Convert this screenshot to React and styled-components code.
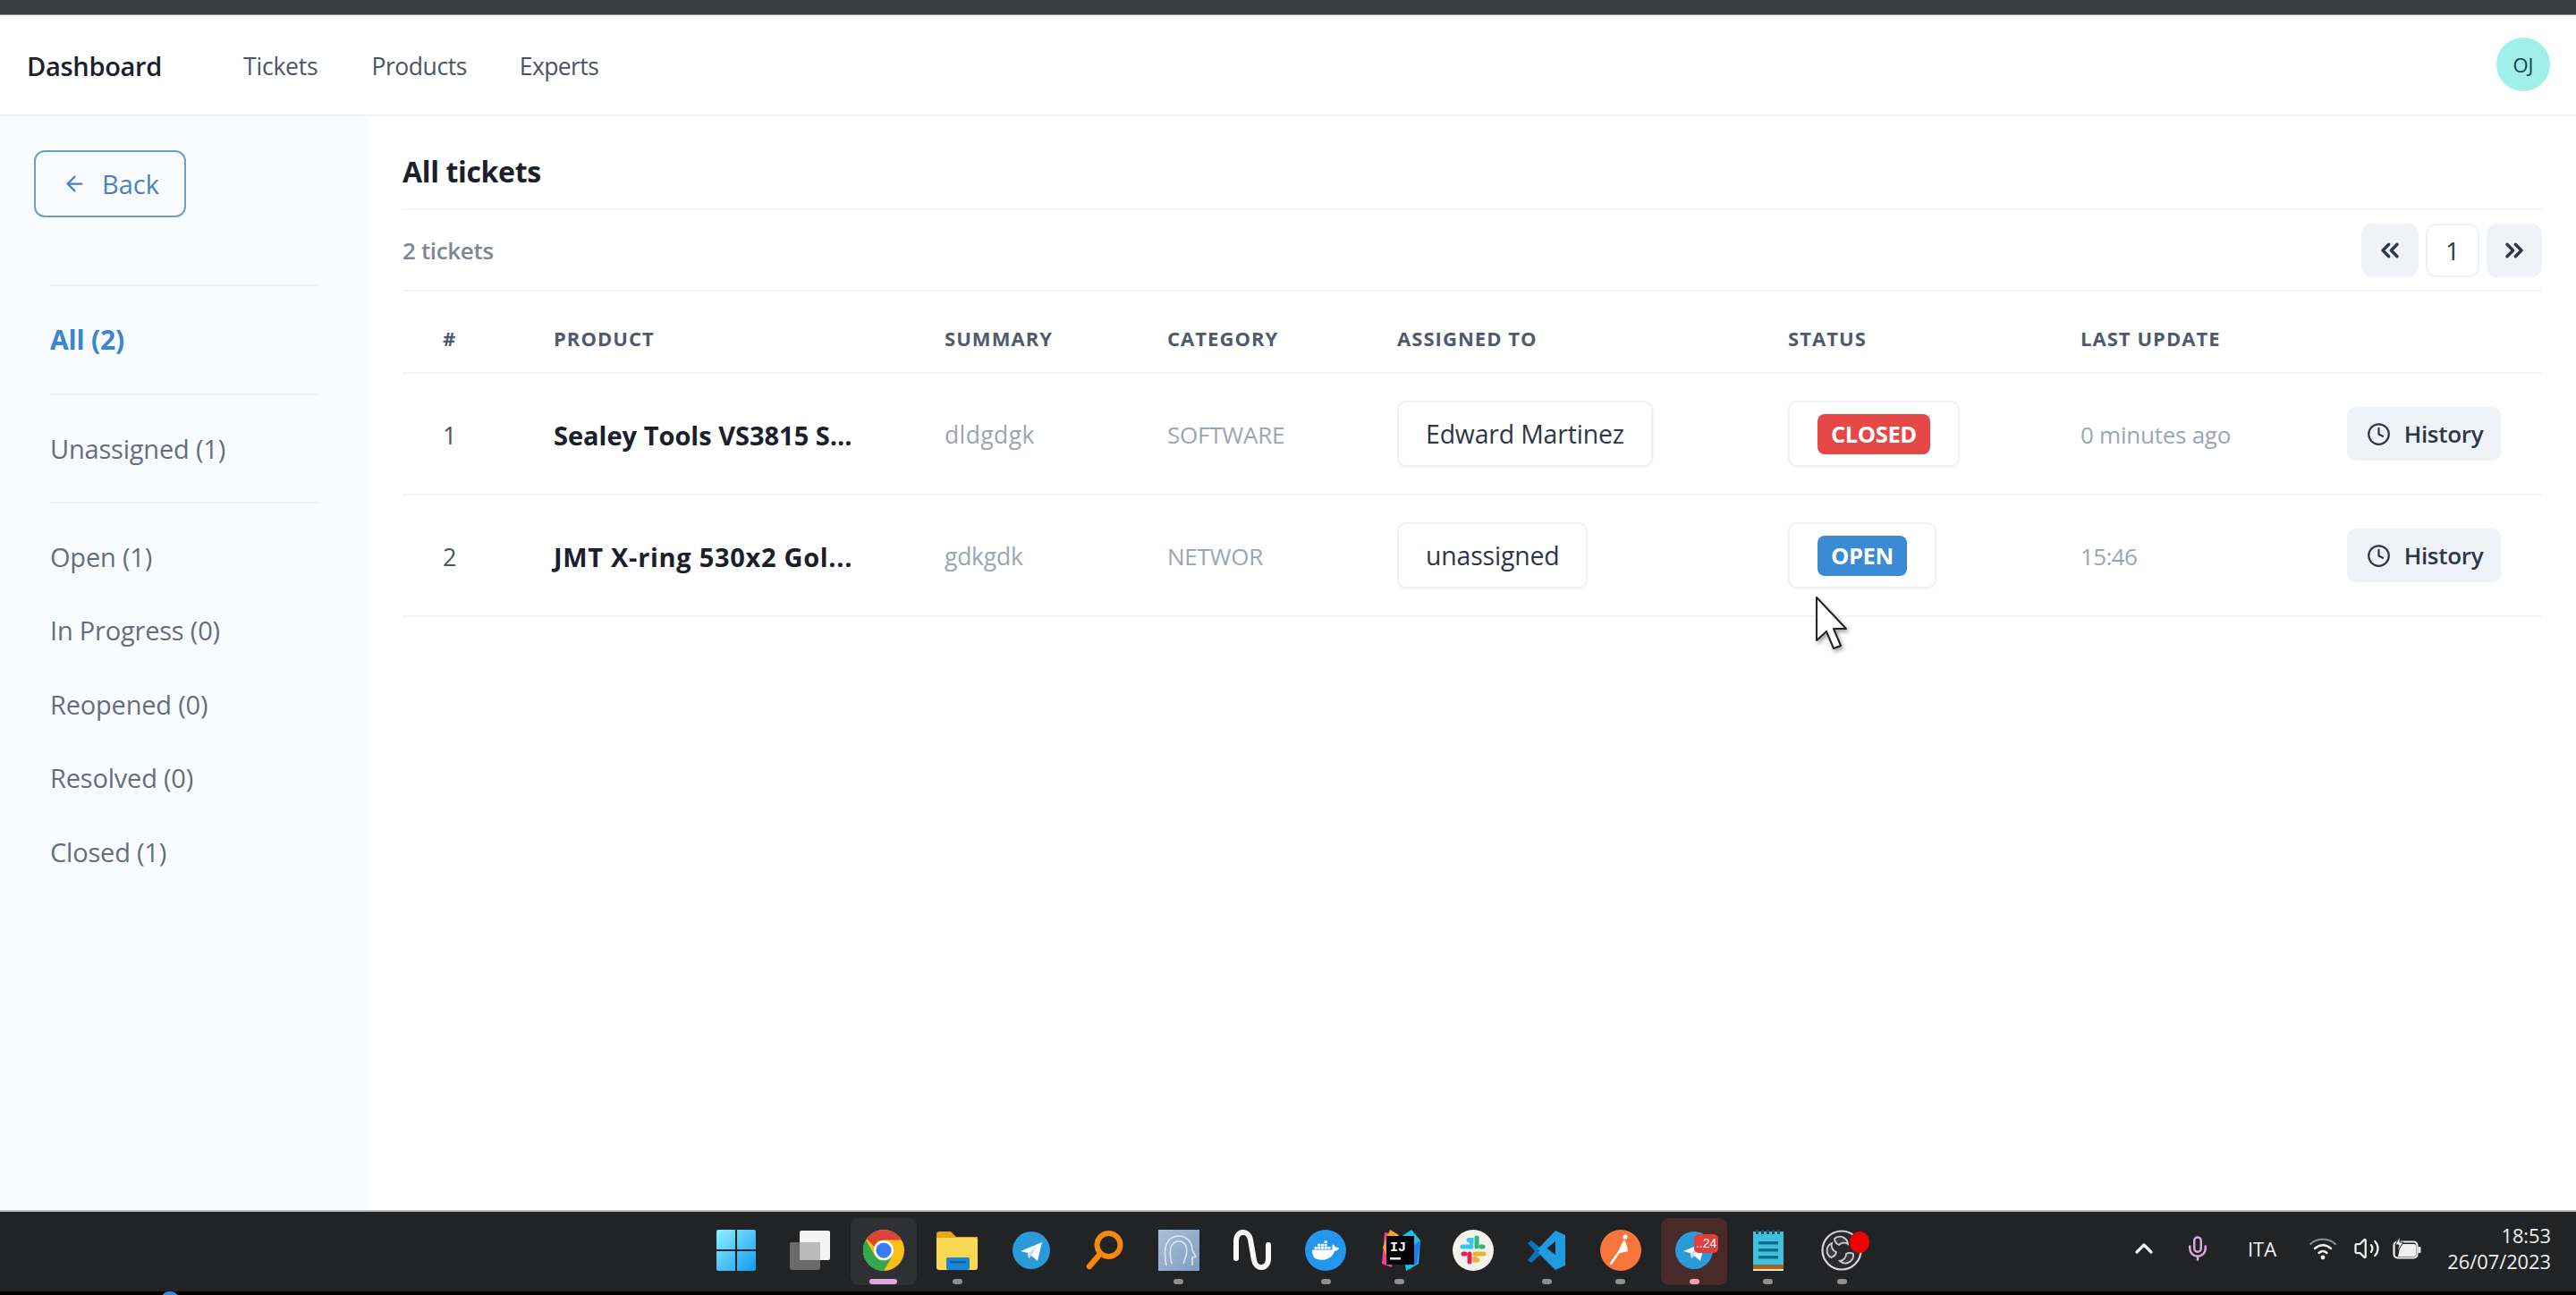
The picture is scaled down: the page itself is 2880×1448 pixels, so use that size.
import React from 'react';
import styled, { createGlobalStyle } from 'styled-components';
import { ArrowLeft, ChevronsLeft, ChevronsRight, Clock, ChevronUp, Mic, Volume2 } from 'lucide-react';
import { SiDocker } from 'react-icons/si';

const Global = createGlobalStyle`
  html, body { margin: 0; padding: 0; background: #fff; }
  * { box-sizing: border-box; }
  body { font-family: "Open Sans", "Noto Sans", "Liberation Sans", sans-serif; color: #1a202c; }
`;
const Page = styled.div`position: relative; width: 2880px; height: 1448px; display: flex; flex-direction: column; overflow: hidden; background: #fff;`;
const TopStrip = styled.div`height: 17px; flex: none; background: #3c3d42; border-bottom: 1px solid #8f9094;`;
const Nav = styled.nav`height: 113px; flex: none; display: flex; align-items: center; padding: 2px 29px 0 30px; border-bottom: 2px solid #edf2f7;`;
const Brand = styled.div`font-size: 29px; font-weight: 600; letter-spacing: -0.3px; width: 242px; color: #1a202c;`;
const NavLink = styled.a`font-size: 26.5px; color: #4a5568; letter-spacing: ${p => p.$track}px; margin-right: ${p => p.$gap}px;`;
const Avatar = styled.div`margin-left: auto; width: 60px; height: 60px; margin-top: -4px; border-radius: 50%; background: #a0efe9; display: flex; align-items: center; justify-content: center; font-size: 22px; font-weight: 500; color: #1a3b44;`;
const Body = styled.div`flex: 1; display: flex; min-height: 0;`;
const Sidebar = styled.aside`width: 412px; flex: none; background: #f9fcfe; padding: 38px 55px 0 38px;`;
const BackButton = styled.button`width: 170px; height: 75px; border: 2px solid #6d9cc9; border-radius: 12px; background: transparent; color: #4a82ba; font: 500 29px "Open Sans", sans-serif; display: flex; align-items: center; justify-content: center; gap: 17px; padding: 0 0 0 2px;`;
const SideNav = styled.div`margin: 75px 0 0 18px;`;
const SideGroup = styled.div`padding: ${p => p.$top}px 0 ${p => p.$bottom}px; border-top: 2px solid #eef3f8; display: flex; flex-direction: column; gap: 42.4px;`;
const SideLink = styled.a`height: 40px; line-height: 40px; font-size: ${p => p.$active ? 30 : 29}px; letter-spacing: -0.2px; white-space: nowrap; color: ${p => p.$active ? '#3a86d0' : '#636e7f'}; font-weight: ${p => p.$active ? 700 : 400};`;
const Main = styled.main`flex: 1; min-width: 0; padding: 0 38px;`;
const TitleRow = styled.div`height: 105px; display: flex; align-items: center; padding-top: 20px; border-bottom: 2px solid #f1f4f8;`;
const Title = styled.h1`margin: 0; font-size: 32px; font-weight: 700; letter-spacing: -0.35px; color: #1a202c;`;
const CountRow = styled.div`height: 91px; display: flex; align-items: center; justify-content: space-between; border-bottom: 2px solid #f1f4f8;`;
const Count = styled.div`font-size: 26px; font-weight: 600; color: #7d8797; letter-spacing: -0.35px;`;
const Pager = styled.div`display: flex; gap: 8px;`;
const PageArrow = styled.button`width: ${p => p.$w}px; height: 60px; border: 0; border-radius: 12px; background: #eff3f8; color: #2d3748; display: flex; align-items: center; justify-content: center; padding: 0;`;
const PageNumber = styled.div`width: 60px; height: 60px; border: 2px solid #edf2f7; border-radius: 12px; background: #fff; display: flex; align-items: center; justify-content: center; font-size: 28px; color: #2d3748;`;
const columns = '124px 437px 249px 257px 437px 327px 298px 1fr';
const HeadRow = styled.div`height: 92px; display: grid; grid-template-columns: ${columns}; align-items: center; padding: 14px 0 0 45px; border-bottom: 2px solid #f1f4f8;`;
const HeadCell = styled.div`font-size: 22px; font-weight: 700; letter-spacing: 1.05px; color: #4f5b6d; text-transform: uppercase;`;
const Row = styled.div`height: 136px; display: grid; grid-template-columns: ${columns}; align-items: center; padding-left: 45px; border-bottom: 2px solid #f1f4f8;`;
const Num = styled.div`font-size: 27px; color: #4a5568; padding-top: 2px;`;
const Product = styled.div`font-size: 29px; font-weight: 700; letter-spacing: ${p => p.$track}px; color: #1a202c; white-space: nowrap; padding-top: 2px;`;
const Muted = styled.div`font-size: ${p => p.$size || 26.5}px; letter-spacing: ${p => p.$track ?? -0.25}px; color: #9aa5b6; white-space: nowrap; padding-top: 2px;`;
const Box = styled.div`display: inline-flex; align-items: center; height: 74px; padding: 0 ${p => p.$pad}px; border: 2px solid #eef2f7; border-radius: 10px; box-shadow: 0 1px 2px rgba(160,175,195,.18); white-space: nowrap;`;
const Assignee = styled(Box)`font-size: 28.4px; letter-spacing: -0.15px; color: #2d3748; justify-self: start;`;
const StatusBox = styled(Box)`justify-self: start;`;
const Badge = styled.span`height: 45px; padding: 0 15px; border-radius: 8px; display: inline-flex; align-items: center; color: #fff; font-size: 25.5px; font-weight: 700; letter-spacing: -0.4px; background: ${p => p.$bg};`;
const History = styled.button`width: 172px; height: 60px; border: 0; border-radius: 10px; background: #eff3f8; color: #2d3748; display: flex; align-items: center; justify-content: center; gap: 15px; padding: 0 0 0 2px; font: 600 26px "Open Sans", sans-serif; letter-spacing: -0.3px;`;
const Taskbar = styled.footer`height: 91px; flex: none; display: flex; background: #212325; border-top: 2px solid #b9b9b9; padding-left: 782px;`;
const BlackStrip = styled.div`height: 4px; flex: none; background: #000; position: relative; overflow: hidden;`;
const BlueDot = styled.div`position: absolute; left: 179px; top: 0; width: 22px; height: 22px; border-radius: 50%; background: #2a8fe8;`;
const TaskItem = styled.div`width: 82.4px; height: 75px; margin-top: 7px; flex: none; display: flex; flex-direction: column; align-items: center; position: relative; padding-top: 13px;
  &::before { content: ''; position: absolute; inset: 0 4px; border-radius: 9px; background: ${p => p.$tile || 'transparent'}; }
  & > * { position: relative; }`;
const Indicator = styled.div`width: ${p => p.$w || 11}px; height: 6px; border-radius: 3px; margin-top: 9px; background: ${p => p.$c || 'transparent'};`;
const Tray = styled.div`margin-left: auto; display: flex; align-items: center; padding-right: 28px; color: #f2f2f2; padding-bottom: 8px;`;
const TrayCell = styled.div`width: ${p => p.$w}px; display: flex; justify-content: center; align-items: center; font-size: 22px; color: #f0f0f0;`;
const Clock2 = styled.div`width: 139px; display: flex; flex-direction: column; align-items: flex-end; font-size: 21.8px; line-height: 29px; color: #f0f0f0;`;
const Cursor = styled.svg`position: absolute; left: 2028px; top: 666px; filter: drop-shadow(2px 3px 2px rgba(0,0,0,.35));`;
const TgBadge = styled.div`position: absolute; top: 18px; left: 41px; width: 27px; height: 21px; border-radius: 5px; background: #e0403c; color: #fff; font-size: 14px; line-height: 21px; text-align: center; font-family: "Liberation Sans", sans-serif;`;
const RedDot = styled.div`position: absolute; top: 15px; left: 50px; width: 22px; height: 24px; border-radius: 50%; background: #f00000;`;

const S = 46;
const Win = () => <svg width={S} height={S} viewBox="0 0 44 44"><defs><linearGradient id="w" x1="0" y1="0" x2="1" y2="1"><stop offset="0" stopColor="#8ff0ff" /><stop offset="1" stopColor="#0f9cf5" /></linearGradient></defs><path fill="url(#w)" d="M1 2a2 2 0 0 1 2-2h18v21H1zM23 0h18a2 2 0 0 1 2 2v19H23zM1 23h20v21H3a2 2 0 0 1-2-2zM23 23h20v19a2 2 0 0 1-2 2H23z" /></svg>;
const TaskView = () => <svg width={S} height={S} viewBox="0 0 46 44"><rect x="0" y="13" width="34" height="31" rx="2" fill="#6a6a6a" /><rect x="11" y="0" width="34" height="33" rx="2" fill="#f4f4f4" /><rect x="11" y="13" width="23" height="20" fill="#b9b9b9" /></svg>;
const Chrome = () => <svg width={S} height={S} viewBox="0 0 48 48"><circle cx="24" cy="24" r="24" fill="#fbc013" /><path fill="#db4437" d="M24 0a24 24 0 0 1 20.8 12H24a12 12 0 0 0-11.2 7.6L4.1 10.6A24 24 0 0 1 24 0z" /><path fill="#32a852" d="M3.2 12A24 24 0 0 0 24 48l10.4-18A12 12 0 0 1 13.6 30z" /><circle cx="24" cy="24" r="11.5" fill="#fff" /><circle cx="24" cy="24" r="9" fill="#3b7cf0" /></svg>;
const Folder = () => <svg width={S} height={S} viewBox="0 0 46 44"><path fill="#e5a812" d="M0 4a3 3 0 0 1 3-3h13l6 6h24v8H0z" /><path fill="#fcd752" d="M0 8h43a3 3 0 0 1 3 3v30a3 3 0 0 1-3 3H3a3 3 0 0 1-3-3z" /><rect x="11" y="30" width="26" height="14" rx="2" fill="#1b86d6" /><rect x="15" y="34" width="18" height="2.5" fill="#0d5fa8" /></svg>;
const Telegram = () => <svg width={S} height={S} viewBox="0 0 46 46"><circle cx="23" cy="23" r="21" fill="#2a9bd8" /><path fill="#fff" d="M11 24l24-10-5 21-7-6-3 3-1-6z" /><path fill="#c9dde9" d="M20 26l9-7-6 10-3 3z" /></svg>;
const Search = () => <svg width={S} height={S} viewBox="0 0 46 46" fill="none" stroke="#f5890f" strokeLinecap="round"><circle cx="27.5" cy="17" r="13" strokeWidth="6" /><path d="M18 27L6 41" strokeWidth="6.5" /></svg>;
const Face = () => <svg width={S} height={S} viewBox="0 0 46 46" fill="none"><defs><linearGradient id="f" x1="0" y1="0" x2="1" y2="1"><stop offset="0" stopColor="#a9c0d8" /><stop offset="1" stopColor="#7f9dc0" /></linearGradient></defs><rect width="46" height="46" fill="url(#f)" /><path d="M9 40c-3-14-3-32 13-33 10 0 16 7 16 16l4 7-4 1v9" stroke="#dfe8f1" strokeWidth="1.6" /><path d="M15 38c-3-12-3-25 8-25 8 0 10 8 8 16l-3 9" stroke="#dfe8f1" strokeWidth="1.6" /></svg>;
const Squiggle = () => <svg width={S} height={S} viewBox="0 0 46 46" fill="none"><path d="M5 32V13c0-13 14-13 16-2l4 23c2 11 16 11 16-2V17" stroke="#f8f8f8" strokeWidth="6" strokeLinecap="round" /></svg>;
const Docker = () => <svg width={S} height={S} viewBox="0 0 46 46"><circle cx="23" cy="23" r="23" fill="#2496ed" /><SiDocker x="8" y="8" size="30" color="#fff" /></svg>;
const IJ = () => <svg width={S} height={S} viewBox="0 0 46 46"><path fill="#fc3d9c" d="M3 38L6 3l14 3-6 36z" /><path fill="#fca326" d="M4 20L12 0l10 6-12 26z" /><path fill="#12c4ea" d="M24 8L36 0l10 12-2 26-14 8z" /><path fill="#2177f0" d="M30 40l12-2 4-26-8 6z" /><rect x="8" y="7" width="31" height="32" fill="#000" /><text x="12" y="24" fill="#fff" fontSize="15" fontWeight="700" fontFamily="Liberation Mono, monospace">IJ</text><rect x="12" y="31" width="12" height="2.5" fill="#fff" /></svg>;
const Slack = () => <svg width={S} height={S} viewBox="0 0 46 46"><circle cx="23" cy="23" r="23" fill="#f4f0ea" /><g strokeWidth="5" strokeLinecap="round" fill="none"><path stroke="#36c5f0" d="M11 19h10M18 11.5h3v3" /><path stroke="#2eb67d" d="M27 9v10M34 19h-2" /><path stroke="#ecb22e" d="M25 27h10M28 34h-3v-2" /><path stroke="#e01e5a" d="M19 27v9M12 27h2" /></g></svg>;
const VSCode = () => <svg width={S} height={S} viewBox="0 0 46 46"><path fill="#0e74b8" d="M2 15l4-3 10 8-3 4 3 4-10 9-4-3 8-10z" /><path fill="#1f9be0" d="M33 1l11 5v34l-11 5-20-20 8-6 12 9V13L18 25l-5-3z" /></svg>;
const Postman = () => <svg width={S} height={S} viewBox="0 0 46 46"><circle cx="23" cy="23" r="23" fill="#f7763c" /><path d="M12 38l9-13 6-12 3 10-9 2" stroke="#fff" strokeWidth="2.4" strokeLinejoin="round" strokeLinecap="round" fill="#fff" /><circle cx="28" cy="8" r="2.6" fill="#fff" /></svg>;
const Notepad = () => <svg width={S} height={S} viewBox="0 0 36 46"><rect x="1" y="2" width="34" height="37" fill="#43c1dc" /><rect x="1" y="39" width="34" height="5" fill="#a2662a" /><rect x="1" y="44" width="34" height="2" fill="#f4e4c4" /><g fill="#1f4a66"><rect x="4" y="0" width="3" height="5" /><rect x="10" y="0" width="3" height="5" /><rect x="16" y="0" width="3" height="5" /><rect x="22" y="0" width="3" height="5" /><rect x="28" y="0" width="3" height="5" /></g><g fill="#0a6e90"><rect x="7" y="13" width="22" height="3.5" /><rect x="7" y="21" width="22" height="3.5" /><rect x="7" y="29" width="22" height="3.5" /></g></svg>;
const OBS = () => <svg width={S} height={S} viewBox="0 0 46 46" fill="none"><circle cx="23" cy="23" r="21.5" fill="#2a2a2e" stroke="#d8d8d8" strokeWidth="2.2" /><g stroke="#cfcfcf" strokeWidth="1.8" fill="#3a3a3e"><path d="M15 10a9 9 0 0 1 15 6 8 8 0 0 0-10 1 8 8 0 0 1-5-7z" /><path d="M36 27a9 9 0 0 1-15 8 8 8 0 0 0 7-8 8 8 0 0 1 8 0z" /><path d="M11 31a9 9 0 0 1 1-16 8 8 0 0 0 5 10 8 8 0 0 1-6 6z" /></g></svg>;
const WifiIcon = () => <svg width="32" height="28" viewBox="0 0 32 28" fill="none" strokeLinecap="round"><path d="M2 9c8-7 20-7 28 0" stroke="#8d8d8d" strokeWidth="2" /><path d="M7 14c6-5 12-5 18 0" stroke="#f0f0f0" strokeWidth="2.4" /><path d="M11.5 19c3-2.6 6-2.6 9 0" stroke="#f0f0f0" strokeWidth="2.4" /><circle cx="16" cy="24" r="2.4" fill="#f0f0f0" /></svg>;
const Battery = () => <svg width="32" height="28" viewBox="0 0 32 28" fill="none"><rect x="1.5" y="6.5" width="26" height="18" rx="4" stroke="#f0f0f0" strokeWidth="2.2" /><path d="M9 9h15a2 2 0 0 1 2 2v10a2 2 0 0 1-2 2H6z" fill="#f0f0f0" /><rect x="28.5" y="12" width="3" height="7" rx="1" fill="#f0f0f0" /><path d="M8 0L3 10h4l-2 8 7-11H8z" fill="#f0f0f0" stroke="#212325" strokeWidth="1" /></svg>;

const tasks = [
  { icon: <Win /> }, { icon: <TaskView /> },
  { icon: <Chrome />, tile: '#2f3034', ind: '#e0a6e0', w: 31 },
  { icon: <Folder />, ind: '#8f8f8f' }, { icon: <Telegram /> }, { icon: <Search /> },
  { icon: <Face />, ind: '#8f8f8f' }, { icon: <Squiggle /> },
  { icon: <Docker />, ind: '#8f8f8f' }, { icon: <IJ />, ind: '#8f8f8f' }, { icon: <Slack /> },
  { icon: <VSCode />, ind: '#8f8f8f' }, { icon: <Postman />, ind: '#8f8f8f' },
  { icon: <Telegram />, tile: '#4a2a28', ind: '#f0a0a8', badge: true },
  { icon: <Notepad />, ind: '#8f8f8f' },
  { icon: <OBS />, ind: '#8f8f8f', dot: true },
];

const sideStatuses = ['Open (1)', 'In Progress (0)', 'Reopened (0)', 'Resolved (0)', 'Closed (1)'];
const rows = [
  { n: 1, product: 'Sealey Tools VS3815 S...', track: 0, summary: 'dldgdgk', sumTrack: 0.4, cat: 'SOFTWARE', who: 'Edward Martinez', status: 'CLOSED', bg: '#e64848', when: '0 minutes ago', whenTrack: -0.25 },
  { n: 2, product: 'JMT X-ring 530x2 Gol...', track: 0.7, summary: 'gdkgdk', sumTrack: -0.25, cat: 'NETWOR', who: 'unassigned', status: 'OPEN', bg: '#3a8ad4', when: '15:46', whenTrack: -0.6 },
];
const heads = ['#', 'Product', 'Summary', 'Category', 'Assigned to', 'Status', 'Last update', ''];

export default function App() {
  return (
    <Page>
      <Global />
      <TopStrip />
      <Nav>
        <Brand>Dashboard</Brand>
        <NavLink $track={-0.2} $gap={60}>Tickets</NavLink>
        <NavLink $track={-0.45} $gap={59}>Products</NavLink>
        <NavLink $track={-0.6} $gap={60}>Experts</NavLink>
        <Avatar>OJ</Avatar>
      </Nav>
      <Body>
        <Sidebar>
          <BackButton><ArrowLeft size={27} strokeWidth={2} />Back</BackButton>
          <SideNav>
            <SideGroup $top={40} $bottom={40}><SideLink $active>All (2)</SideLink></SideGroup>
            <SideGroup $top={40} $bottom={39}><SideLink>Unassigned (1)</SideLink></SideGroup>
            <SideGroup $top={40} $bottom={0}>
              {sideStatuses.map(s => <SideLink key={s}>{s}</SideLink>)}
            </SideGroup>
          </SideNav>
        </Sidebar>
        <Main>
          <TitleRow><Title>All tickets</Title></TitleRow>
          <CountRow>
            <Count>2 tickets</Count>
            <Pager>
              <PageArrow $w={64}><ChevronsLeft size={32} strokeWidth={2.6} /></PageArrow>
              <PageNumber>1</PageNumber>
              <PageArrow $w={62}><ChevronsRight size={32} strokeWidth={2.6} /></PageArrow>
            </Pager>
          </CountRow>
          <HeadRow>{heads.map((h, i) => <HeadCell key={i}>{h}</HeadCell>)}</HeadRow>
          {rows.map(r => (
            <Row key={r.n}>
              <Num>{r.n}</Num>
              <Product $track={r.track}>{r.product}</Product>
              <Muted $track={r.sumTrack}>{r.summary}</Muted>
              <Muted $size={26}>{r.cat}</Muted>
              <div><Assignee $pad={30}>{r.who}</Assignee></div>
              <div><StatusBox $pad={31}><Badge $bg={r.bg}>{r.status}</Badge></StatusBox></div>
              <Muted $size={26} $track={r.whenTrack}>{r.when}</Muted>
              <History><Clock size={27} strokeWidth={2} />History</History>
            </Row>
          ))}
        </Main>
      </Body>
      <Taskbar>
        {tasks.map((t, i) => (
          <TaskItem key={i} $tile={t.tile}>
            {t.icon}
            <Indicator $c={t.ind} $w={t.w} />
            {t.badge && <TgBadge>..24</TgBadge>}
            {t.dot && <RedDot />}
          </TaskItem>
        ))}
        <Tray>
          <TrayCell $w={60}><ChevronUp size={32} strokeWidth={2.4} /></TrayCell>
          <TrayCell $w={60}><Mic size={30} color="#d9a8dc" strokeWidth={2} /></TrayCell>
          <TrayCell $w={84}>ITA</TrayCell>
          <TrayCell $w={52}><WifiIcon /></TrayCell>
          <TrayCell $w={45}><Volume2 size={30} strokeWidth={1.8} /></TrayCell>
          <TrayCell $w={45}><Battery /></TrayCell>
          <Clock2><span>18:53</span><span>26/07/2023</span></Clock2>
        </Tray>
      </Taskbar>
      <BlackStrip><BlueDot /></BlackStrip>
      <Cursor width="38" height="62" viewBox="0 0 38 62"><path d="M3 2v48l11-10 8 19 8-3-8-19h14z" fill="#fff" stroke="#222" strokeWidth="2" strokeLinejoin="round" /></Cursor>
    </Page>
  );
}
